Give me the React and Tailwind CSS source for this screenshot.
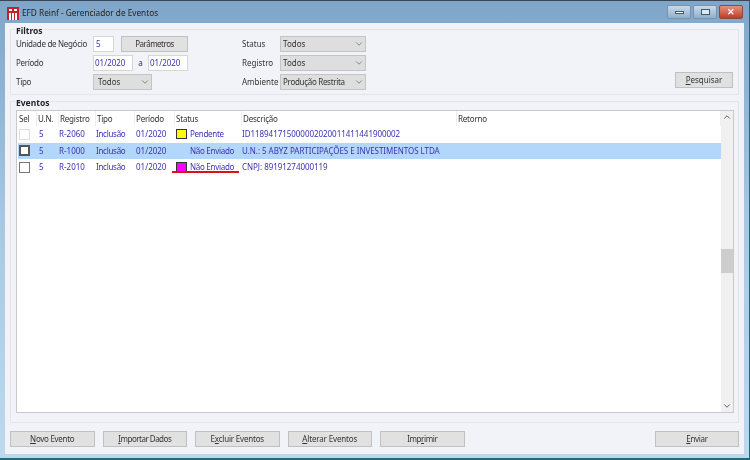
import React from "react";
import { ChevronDown, ChevronUp } from "lucide-react";

function Mn({ k, rest }) {
  return (
    <span>
      <span className="underline">{k}</span>
      {rest}
    </span>
  );
}

function Btn({ className, children }) {
  return (
    <div className={"flex h-[16px] items-center justify-center border border-[#c0c0c0] bg-[#e1e1e1] text-[#333333] " + className}>
      {children}
    </div>
  );
}

function Select({ className, value }) {
  return (
    <div className={"flex h-[16px] items-center justify-between border border-[#c4c4c4] bg-[#dedede] pl-[2px] pr-[1px] text-[#333333] " + className}>
      <span className="whitespace-nowrap">{value}</span>
      <ChevronDown size={10} strokeWidth={1.5} className="text-[#555555]" />
    </div>
  );
}

function Input({ className, value }) {
  return (
    <div className={"flex h-[16px] items-center border border-[#d6d6d6] bg-white pl-[1px] text-[#3b2fb5] " + className}>
      {value}
    </div>
  );
}

function Row({ label, labelW = "w-[77px] tracking-[-0.3px]", children }) {
  return (
    <div className="flex h-[16px] items-center">
      <div className={"whitespace-nowrap text-[#333333] " + labelW}>{label}</div>
      {children}
    </div>
  );
}

const cols = ["w-[19px]", "w-[22px]", "w-[37px]", "w-[39px]", "w-[40px]", "w-[67px]", "w-[215px]", "flex-1"];

function Check({ kind }) {
  if (kind === "light") return <div className="h-[11px] w-[11px] border border-[#dddddd] bg-white" />;
  if (kind === "focus") return <div className="h-[11px] w-[11px] border-2 border-[#555555] bg-white" />;
  return <div className="h-[11px] w-[11px] border border-[#777777] bg-white" />;
}

function TableRow({ check, reg, swatch, status, desc, selected }) {
  return (
    <div className={"flex h-[16.5px] items-center text-[#3b2fb5] " + (selected ? "bg-[#b3d7fb]" : "")}>
      <div className={cols[0] + " flex items-center pl-[1px]"}><Check kind={check} /></div>
      <div className={cols[1] + " pl-[2px]"}>5</div>
      <div className={cols[2]}>{reg}</div>
      <div className={cols[3] + " tracking-[-0.28px]"}>Inclusão</div>
      <div className={cols[4] + " pl-[1px]"}>01/2020</div>
      <div className={cols[5] + " flex items-center pl-[1px]"}>
        <div className="flex w-[14px] shrink-0">
          {swatch && <div className={"h-[10px] w-[11px] border border-[#333333] " + swatch} />}
        </div>
        <span className="whitespace-nowrap tracking-[-0.28px]">{status}</span>
      </div>
      <div className="flex-1 whitespace-nowrap tracking-[-0.04px]">{desc}</div>
    </div>
  );
}

export default function App() {
  return (
    <div
      className="flex h-[460px] w-[750px] flex-col overflow-hidden bg-[#1f6a7d] text-[8px] leading-none blur-[0.35px]"
      style={{ fontFamily: '"Noto Sans", "Liberation Sans", sans-serif' }}
    >
      <div className="h-[1px] bg-[#3a4656]" />
      <div className="mr-[1px] flex h-[457px] flex-col bg-gradient-to-b from-[#7fa6c9] via-[#a9c9e3] to-[#bcd9ee] px-[5px] pb-[4px]">
        {/* title bar */}
        <div className="flex h-[22px] shrink-0 items-center pt-[2px]">
          <svg width="12" height="13" viewBox="0 0 12 13" className="ml-[2px] mr-[3px]">
            <rect x="0" y="0" width="12" height="13" fill="#c2202b" />
            <rect x="2" y="2" width="3" height="2" fill="#fff" />
            <rect x="7" y="2" width="3" height="2" fill="#fff" />
            <rect x="2" y="6" width="2" height="7" fill="#fff" />
            <rect x="5" y="6" width="2" height="7" fill="#fff" />
            <rect x="8" y="6" width="2" height="7" fill="#fff" />
          </svg>
          <span className="text-[8.25px] text-[#222222]">EFD Reinf - Gerenciador de Eventos</span>
          <div className="ml-auto flex gap-[2px] pb-[3px] pr-[1px]">
            <div className="flex h-[14px] w-[24px] items-center justify-center rounded-[2px] border border-[#7a93ad] bg-gradient-to-b from-[#c8dcec] to-[#90afcb]">
              <div className="mt-[2px] h-[3px] w-[9px] border border-[#44586b] bg-white" />
            </div>
            <div className="flex h-[14px] w-[24px] items-center justify-center rounded-[2px] border border-[#7a93ad] bg-gradient-to-b from-[#c8dcec] to-[#90afcb]">
              <div className="h-[6px] w-[9px] border border-[#44586b] bg-[#dfe9f2]" />
            </div>
            <div className="flex h-[14px] w-[24px] items-center justify-center rounded-[2px] border border-[#8c4a42] bg-gradient-to-b from-[#e0917f] to-[#c23a22] text-[9px] font-bold text-white">
              ✕
            </div>
          </div>
        </div>

        {/* client area */}
        <div className="flex flex-1 flex-col bg-[#f2f3f9] pl-[5px] pr-[5px] pt-[6px]">
          {/* Filtros */}
          <div className="relative h-[66px] shrink-0 border border-[#e4e5ea] pl-[5px] pr-[5px] pt-[6px]">
            <div className="absolute -top-[3px] left-[4px] bg-[#f2f3f9] px-[1px] text-[8.5px] font-bold text-[#222222]">Filtros</div>
            <div className="flex h-full">
              <div className="flex w-[226px] flex-col gap-[3px]">
                <Row label="Unidade de Negócio">
                  <Input className="w-[21px] pl-[2px]" value="5" />
                  <Btn className="ml-[7px] w-[67px] tracking-[-0.5px]">Parâmetros</Btn>
                </Row>
                <Row label="Período">
                  <Input className="w-[40px]" value="01/2020" />
                  <span className="w-[15px] text-center text-[#333333]">a</span>
                  <Input className="w-[40px]" value="01/2020" />
                </Row>
                <Row label="Tipo">
                  <Select className="w-[59px] pl-[4px]" value="Todos" />
                </Row>
              </div>
              <div className="flex w-[125px] flex-col gap-[3px]">
                <Row label="Status" labelW="w-[38px]"><Select className="w-[86px]" value="Todos" /></Row>
                <Row label="Registro" labelW="w-[38px]"><Select className="w-[86px]" value="Todos" /></Row>
                <Row label="Ambiente" labelW="w-[38px]"><Select className="w-[86px] tracking-[-0.3px]" value="Produção Restrita" /></Row>
              </div>
              <div className="flex flex-1 items-end justify-end pb-[6px]">
                <Btn className="w-[58px]"><Mn k="P" rest="esquisar" /></Btn>
              </div>
            </div>
          </div>

          {/* Eventos */}
          <div className="relative mt-[6px] flex h-[322px] shrink-0 flex-col border border-[#e4e5ea] pb-[9px] pl-[5px] pr-[4px] pt-[8px]">
            <div className="absolute -top-[3px] left-[4px] bg-[#f2f3f9] px-[1px] text-[8.5px] font-bold text-[#222222]">Eventos</div>
            <div className="relative flex flex-1 border border-[#c9c9cc] bg-white">
              <div className="flex min-w-0 flex-1 flex-col pl-[1px]">
                <div className="flex h-[15px] items-center tracking-[-0.2px] text-[#333333]">
                  {["Sel", "U.N.", "Registro", "Tipo", "Período", "Status", "Descrição", "Retorno"].map((h, i) => (
                    <div key={h} className={cols[i] + " flex h-full items-center border-r border-[#eeeeee] pl-[1px]"}>{h}</div>
                  ))}
                </div>
                <TableRow check="light" reg="R-2060" swatch="bg-[#ffff00]" status="Pendente" desc="ID118941715000002020011411441900002" />
                <TableRow check="focus" reg="R-1000" status="Não Enviado" desc="U.N.: 5 ABYZ PARTICIPAÇÕES E INVESTIMENTOS LTDA" selected />
                <TableRow check="box" reg="R-2010" swatch="bg-[#ff00ff]" status="Não Enviado" desc="CNPJ: 89191274000119" />
              </div>
              <div className="relative flex w-[12px] shrink-0 flex-col items-center justify-between bg-[#f0f0f0] py-[1px] text-[#444444]">
                <ChevronUp size={10} strokeWidth={2} />
                <ChevronDown size={10} strokeWidth={2} />
                <div className="absolute left-0 top-[138px] h-[24px] w-full bg-[#cdcdcd]" />
              </div>
              <div className="absolute left-[155px] top-[60px] h-[2px] w-[67px] bg-[#e0101a]" />
            </div>
          </div>

          {/* Buttons */}
          <div className="mt-[8px] flex gap-[8px] pb-[7px]">
            <Btn className="w-[84.5px] tracking-[-0.28px]"><Mn k="N" rest="ovo Evento" /></Btn>
            <Btn className="w-[84.5px] tracking-[-0.5px]"><Mn k="I" rest="mportar Dados" /></Btn>
            <Btn className="w-[84.5px] tracking-[-0.2px]"><span>E<span className="underline">x</span>cluir Eventos</span></Btn>
            <Btn className="w-[84.5px] tracking-[-0.15px]"><Mn k="A" rest="lterar Eventos" /></Btn>
            <Btn className="w-[84.5px] tracking-[-0.4px]"><span>Imp<span className="underline">r</span>imir</span></Btn>
            <Btn className="ml-auto w-[84px] tracking-[-0.3px]"><Mn k="E" rest="nviar" /></Btn>
          </div>
        </div>
      </div>
    </div>
  );
}
